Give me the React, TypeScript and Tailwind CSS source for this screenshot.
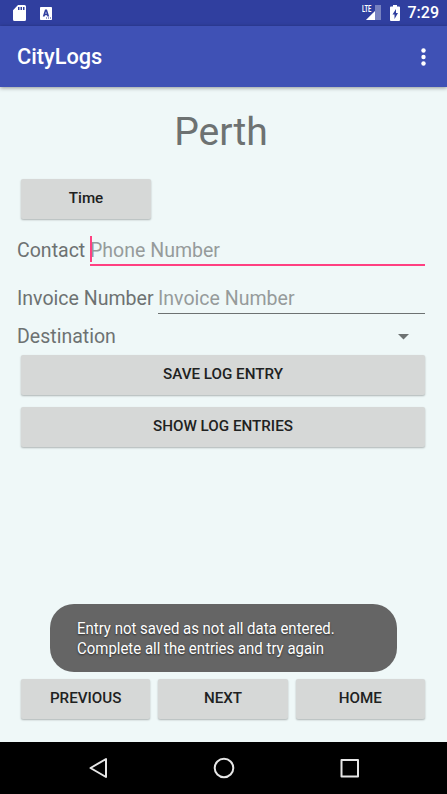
import React from "react";

function ActionButton({ label, className = "" }: { label: string; className?: string }) {
  return (
    <button
      type="button"
      className={`flex items-center justify-center rounded-[2px] bg-[#d6d8d7] text-[15.2px] leading-none font-medium text-[#202121] shadow-[0_1px_2px_rgba(0,0,0,0.28)] ${className}`}
    >
      {label}
    </button>
  );
}

function StatusBar() {
  return (
    <div className="flex h-[26px] shrink-0 items-center bg-[#303f9f] pr-2 pl-[13px] text-white">
      <svg width="13" height="16" viewBox="0 0 13 16">
        <path fillRule="evenodd" fill="#fff" d="M5 0h6.5A1.5 1.5 0 0 1 13 1.500v13a1.500 1.500 0 0 1-1.500 1.500h-10A1.500 1.500 0 0 1 0 14.500V5.200zM5 2v3h1.500V2zm2.500 0v3H9V2zM10 2v3h1.500V2z" />
      </svg>
      <svg className="ml-[14px]" width="12" height="13" viewBox="0 0 12 13">
        <rect width="12" height="13" rx="0.800" fill="#fff" />
        <path fillRule="evenodd" fill="#303f9f" d="M5 2.500h2l2.200 7H7.400L7 8.200H5l-.4 1.300H2.800zM5.400 6.800h1.200L6 4.600z" />
        <path fill="#303f9f" d="M6 10.500h1v1H6zM8 10.500h1v1H8zM10 10.500h1v1h-1z" />
      </svg>
      <div className="grow" />
      <div className="relative h-4 w-[19px]">
        <svg className="absolute top-0 left-[4px]" width="15" height="15" viewBox="0 0 15 15">
          <path fill="#fff" fillOpacity="0.35" d="M15 0v15H0L7 8h2V0z" />
          <path fill="#fff" d="M9 6v9H0z" />
        </svg>
        <span className="absolute top-0 left-0 origin-left scale-x-[0.68] text-[8.500px] leading-[8px] font-bold">LTE</span>
      </div>
      <svg className="ml-[9px]" width="10" height="16" viewBox="0 0 10 16">
        <path fillRule="evenodd" fill="#fff" d="M3 0h4v1.500h2a1 1 0 0 1 1 1V15a1 1 0 0 1-1 1H1a1 1 0 0 1-1-1V2.500a1 1 0 0 1 1-1h2zM6 4L2.500 9.500h2V14L8 8H6z" />
      </svg>
      <span className="ml-2 text-[16px] leading-none font-medium">7:29</span>
    </div>
  );
}

export default function App() {
  return (
    <div className="relative flex h-[794px] w-[447px] flex-col overflow-hidden bg-[#eff8f8] font-[Roboto,sans-serif] text-[#6d7272]">
      <StatusBar />
      <header className="z-10 flex h-[61px] shrink-0 items-center justify-between bg-[#3f51b5] pr-[21px] pl-[17px] text-white shadow-[0_1px_4px_rgba(0,0,0,0.4)]">
        <h1 className="text-[21.750px] leading-none font-medium">CityLogs</h1>
        <svg width="5" height="18" viewBox="0 0 5 18" fill="#fff">
          <circle cx="2.500" cy="2.500" r="2.200" />
          <circle cx="2.500" cy="9" r="2.200" />
          <circle cx="2.500" cy="15.500" r="2.200" />
        </svg>
      </header>

      <main className="flex h-[655px] shrink-0 flex-col pr-[22px] pl-[17px]">
        <h2 className="mt-[22px] h-[46px] text-center text-[39.100px] leading-[46px]">Perth</h2>
        <ActionButton label="Time" className="mt-6 ml-1 h-10 w-[130px]" />

        <div className="mt-4 flex h-[31px] text-[19.550px] leading-[31px]">
          <span className="w-[73px] shrink-0 whitespace-nowrap">Contact</span>
          <div className="relative grow border-b-2 border-[#ff4081] text-[#969b9b]">
            Phone Number
            <span className="absolute top-[1px] left-0 h-[26px] w-[2px] bg-[#ff4081]" />
          </div>
        </div>
        <div className="mt-[17px] flex h-[31px] text-[19.550px] leading-[31px]">
          <span className="w-[141px] shrink-0 whitespace-nowrap">Invoice Number</span>
          <div className="grow border-b border-[#6d7272] text-[#969b9b]">Invoice Number</div>
        </div>
        <div className="mt-[10px] flex h-[26px] items-center justify-between pr-4 text-[19.550px] leading-[26px]">
          <span>Destination</span>
          <svg width="11" height="6" viewBox="0 0 11 6">
            <path d="M0 0h11L5.500 5.500z" fill="#6d7272" />
          </svg>
        </div>
        <ActionButton label="SAVE LOG ENTRY" className="mt-[5px] ml-1 h-10 shrink-0" />
        <ActionButton label="SHOW LOG ENTRIES" className="mt-3 ml-1 h-10 shrink-0" />

        <div className="mt-auto mb-[23px] ml-1 grid grid-cols-3 gap-2">
          <ActionButton label="PREVIOUS" className="h-10" />
          <ActionButton label="NEXT" className="h-10" />
          <ActionButton label="HOME" className="h-10" />
        </div>
      </main>

      <div className="absolute top-[604px] left-[50px] z-20 flex h-[68px] w-[347px] flex-col justify-center rounded-[24px] bg-[#656565] pl-[27px] text-[17px] leading-5 text-white [text-shadow:0_1px_2px_rgba(0,0,0,0.6)]">
        <p className="w-max origin-left scale-x-[0.88] whitespace-nowrap">Entry not saved as not all data entered.</p>
        <p className="w-max origin-left scale-x-[0.88] whitespace-nowrap">Complete all the entries and try again</p>
      </div>

      <nav className="flex h-[52px] shrink-0 items-center justify-center bg-black">
        <svg width="270" height="22" viewBox="0 0 270 22" fill="none" stroke="#e6e6e6" strokeWidth="2" strokeLinejoin="round">
          <path d="M17 2v18L1.500 11z" />
          <circle cx="135" cy="11" r="9.300" />
          <rect x="252.500" y="3" width="16.500" height="16.500" />
        </svg>
      </nav>
    </div>
  );
}
